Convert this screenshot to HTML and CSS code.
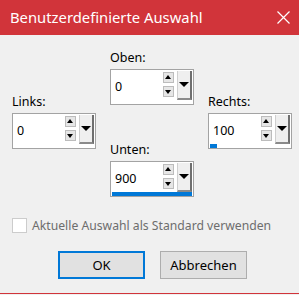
FILE: index.html
```html
<!DOCTYPE html>
<html lang="de">
<head>
    <meta charset="UTF-8">
    <title>Benutzerdefinierte Auswahl</title>
    <link rel="stylesheet" href="styles.css">
</head>
<body>
    <div class="dialog">
        <div class="titlebar">
            <span class="title">Benutzerdefinierte Auswahl</span>
            <svg class="close" width="13" height="13" viewBox="0 0 13 13">
                <path d="M0.5 0.5 L12.5 12.5 M12.5 0.5 L0.5 12.5" stroke="#fff" stroke-width="1.2" fill="none"/>
            </svg>
        </div>

        <div class="content">
            <div class="fields">
                <!-- Links -->
                <div class="col side">
                    <div class="label">Links:</div>
                    <div class="spinbox">
                        <span class="value">0</span>
                        <div class="spin">
                            <span class="spin-btn up"></span>
                            <span class="spin-btn down"></span>
                        </div>
                        <span class="drop"></span>
                    </div>
                </div>

                <!-- Oben / Unten -->
                <div class="col middle">
                    <div class="group">
                        <div class="label">Oben:</div>
                        <div class="spinbox">
                            <span class="value">0</span>
                            <div class="spin">
                                <span class="spin-btn up"></span>
                                <span class="spin-btn down"></span>
                            </div>
                            <span class="drop"></span>
                        </div>
                    </div>
                    <div class="group unten">
                        <div class="label">Unten:</div>
                        <div class="spinbox">
                            <span class="value">900</span>
                            <div class="spin">
                                <span class="spin-btn up"></span>
                                <span class="spin-btn down"></span>
                            </div>
                            <span class="drop"></span>
                            <span class="bar" style="width: 80px"></span>
                        </div>
                    </div>
                </div>

                <!-- Rechts -->
                <div class="col side">
                    <div class="label">Rechts:</div>
                    <div class="spinbox">
                        <span class="value">100</span>
                        <div class="spin">
                            <span class="spin-btn up"></span>
                            <span class="spin-btn down"></span>
                        </div>
                        <span class="drop"></span>
                        <span class="bar" style="width: 7px"></span>
                    </div>
                </div>
            </div>

            <label class="check">
                <span class="check-box"></span>
                Aktuelle Auswahl als Standard verwenden
            </label>

            <div class="buttons">
                <button class="btn default">OK</button>
                <button class="btn">Abbrechen</button>
            </div>
        </div>
    </div>
</body>
</html>
```

FILE: styles.css
```css
html, body {
    margin: 0;
    padding: 0;
}
body {
    width: 299px;
    height: 295px;
    background-color: #f0f0f0;
    font-family: "Noto Sans", "Open Sans", sans-serif;
    font-size: 12.5px;
    color: #000;
    overflow: hidden;
}
.dialog {
    height: 294px;
    box-sizing: border-box;
    border-bottom: 1px solid #d1343a;
}
.titlebar {
    height: 35px;
    background-color: #d1343a;
    display: flex;
    align-items: center;
    padding: 0 8px 0 10px;
}
.title {
    flex: 1;
    color: #fff;
    font-size: 14.8px;
    margin-top: -1px;
}
.close {
    margin-right: 1px;
    margin-top: -1px;
}
.content {
    padding: 15px 0 0 12px;
}
.fields {
    display: flex;
    gap: 14px;
}
.col {
    width: 84px;
    display: flex;
    flex-direction: column;
}
.side {
    padding-top: 44px;
}
.middle {
    gap: 37px;
}
.label {
    height: 16px;
    line-height: 16px;
    margin-bottom: 3px;
}
.spinbox {
    position: relative;
    height: 36px;
    box-sizing: border-box;
    border: 1px solid #a3a3a3;
    background-color: #fff;
    display: flex;
    align-items: flex-start;
}
.value {
    flex: 1;
    line-height: 34px;
    padding-left: 4px;
}
.spin {
    display: flex;
    flex-direction: column;
    gap: 3px;
    margin-top: 2px;
    margin-right: 3px;
}
.spin-btn {
    width: 11px;
    height: 11px;
    box-sizing: border-box;
    border: 1px solid #bcbcbc;
    background-color: #e6e6e6;
    position: relative;
}
.spin-btn::after {
    content: "";
    position: absolute;
    left: 1px;
    top: 2px;
    border-left: 3.5px solid transparent;
    border-right: 3.5px solid transparent;
}
.up::after {
    border-bottom: 4px solid #000;
}
.down::after {
    top: 3px;
    border-top: 4px solid #000;
}
.drop {
    position: relative;
    width: 15px;
    height: 29px;
    margin-top: 1px;
    margin-right: 1px;
    box-sizing: border-box;
    background-color: #efefef;
    border-left: 1px solid #cfcfcf;
    border-right: 2px solid #6f6f6f;
    border-bottom: 2px solid #8a8a8a;
}
.drop::after {
    content: "";
    position: absolute;
    left: 1px;
    top: 11px;
    border-left: 5px solid transparent;
    border-right: 5px solid transparent;
    border-top: 5px solid #000;
}
.bar {
    position: absolute;
    left: 1px;
    bottom: 0;
    height: 4px;
    background-color: #0078d7;
}
.check {
    display: flex;
    align-items: center;
    gap: 5px;
    margin-top: 20px;
    color: #6d6d6d;
    font-size: 12.2px;
    height: 16px;
}
.check-box {
    width: 15px;
    height: 15px;
    box-sizing: border-box;
    border: 1px solid #cccccc;
    background-color: #fff;
}
.buttons {
    display: flex;
    justify-content: center;
    gap: 15px;
    margin-top: 18px;
    padding-right: 6px;
}
.btn {
    width: 87px;
    height: 28px;
    box-sizing: border-box;
    background-color: #e1e1e1;
    border: 1px solid #adadad;
    font-family: inherit;
    font-size: 13px;
    color: #000;
    padding: 0;
}
.btn.default {
    border: 2px solid #0078d7;
}
```
